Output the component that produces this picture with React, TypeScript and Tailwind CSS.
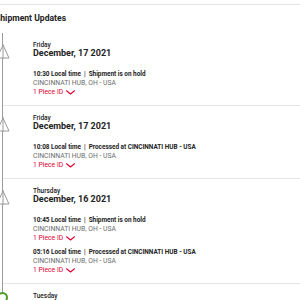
const days = [
  {
    day: "Friday",
    date: "December, 17 2021",
    events: [{ time: "10:30", text: "Shipment is on hold", place: "CINCINNATI HUB, OH - USA" }],
  },
  {
    day: "Friday",
    date: "December, 17 2021",
    events: [{ time: "10:08", text: "Processed at CINCINNATI HUB - USA", place: "CINCINNATI HUB, OH - USA" }],
  },
  {
    day: "Thursday",
    date: "December, 16 2021",
    events: [
      { time: "10:45", text: "Shipment is on hold", place: "CINCINNATI HUB, OH - USA" },
      { time: "05:16", text: "Processed at CINCINNATI HUB - USA", place: "CINCINNATI HUB, OH - USA" },
    ],
  },
];

function Triangle() {
  return (
    <svg width="14" height="15" viewBox="0 0 14 15" className="absolute left-[-7px] top-[11px]" aria-hidden="true">
      <path d="M7 1 L13 14 L1 14 Z" fill="white" stroke="#9a9a9a" strokeWidth="1" />
      <path d="M7 0 V15" stroke="#9a9a9a" strokeWidth="1" />
    </svg>
  );
}

function Chevron() {
  return (
    <svg width="9" height="5" viewBox="0 0 9 5" fill="none" aria-hidden="true">
      <path d="M0.5 0.8 L4.5 4 L8.5 0.8" stroke="#de002e" strokeWidth="1.1" strokeLinecap="round" strokeLinejoin="round" />
    </svg>
  );
}

export default function App() {
  return (
    <div className="h-[300px] w-[300px] overflow-hidden bg-white font-['Roboto',sans-serif] text-[#222]">
      <div className="mt-[4px] border-t border-[#e6e6e6]" />
      <h2 className="-ml-[5px] mt-[8px] h-[20px] text-[8.6px] font-bold leading-[11px]">Shipment Updates</h2>

      <div className="ml-[2px] border-l border-[#9a9a9a] pb-[40px]">
        {days.map((d, i) => (
          <div
            key={i}
            className={`relative pb-[8px] pl-[30px] pt-[9px] ${i > 0 ? "border-t border-[#e6e6e6]" : ""}`}
          >
            <Triangle />
            <p className="text-[6.5px] font-medium leading-[7px]">{d.day}</p>
            <p className="text-[9px] font-bold leading-[9px]">{d.date}</p>
            <div className="mt-[12px] flex flex-col gap-[5px]">
              {d.events.map((e, j) => (
                <div key={j}>
                  <p className="whitespace-nowrap text-[6.4px] font-bold leading-[9px]">
                    {e.time} Local time<span className="mx-[3px]">|</span>{e.text}
                  </p>
                  <p className="text-[6.8px] leading-[9px] text-[#6b6b6b]">{e.place}</p>
                  <p className="flex items-center gap-[3px] text-[6.8px] leading-[9px] text-[#de002e]">
                    1 Piece ID <Chevron />
                  </p>
                </div>
              ))}
            </div>
          </div>
        ))}
        <div className="relative border-t border-[#e6e6e6] pl-[30px] pt-[9px]">
          <span className="absolute left-[-6px] top-[8px] h-[11px] w-[11px] rounded-full border-[2px] border-[#4d9a2a] bg-white" />
          <p className="text-[6.5px] font-medium leading-[7px]">Tuesday</p>
        </div>
      </div>
    </div>
  );
}
